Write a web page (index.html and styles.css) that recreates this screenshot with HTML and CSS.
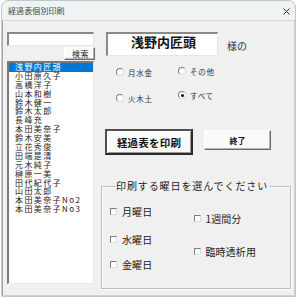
FILE: index.html
```html
<!DOCTYPE html>
<html lang="ja">
<head>
<meta charset="utf-8">
<title>経過表個別印刷</title>
<link rel="stylesheet" href="styles.css">
</head>
<body>
<div class="window">
  <div class="titlebar">
    <span class="title">経過表個別印刷</span>
    <svg class="close" width="7" height="7" viewBox="0 0 7 7"><path d="M0.5 0.5L6.5 6.5M6.5 0.5L0.5 6.5" stroke="#333" stroke-width="1"/></svg>
  </div>
  <div class="client">
    <div class="left">
      <div class="textbox"></div>
      <div class="btn search">検索</div>
      <div class="listbox">
        <div class="item selected">浅野内匠頭</div>
        <div class="item">小田原久子</div>
        <div class="item">高橋洋子</div>
        <div class="item">山本和樹</div>
        <div class="item">鈴木健一</div>
        <div class="item">鈴木太郎</div>
        <div class="item">長峰充</div>
        <div class="item">本田美奈子</div>
        <div class="item">鈴木安美</div>
        <div class="item">立花秀俊</div>
        <div class="item">田端是清</div>
        <div class="item">元木純子</div>
        <div class="item">榊原一美</div>
        <div class="item">田代紀代子</div>
        <div class="item">山田太郎</div>
        <div class="item">本田美奈子No2</div>
        <div class="item">本田美奈子No3</div>
      </div>
    </div>
    <div class="right">
      <div class="namerow">
        <div class="namebox">浅野内匠頭</div>
        <div class="sama">様の</div>
      </div>
      <div class="radios">
        <div class="rcol rcol1">
          <div class="radio"><span class="dot"></span><span>月水金</span></div>
          <div class="radio"><span class="dot"></span><span>火木土</span></div>
        </div>
        <div class="rcol rcol2">
          <div class="radio"><span class="dot"></span><span>その他</span></div>
          <div class="radio"><span class="dot checked"></span><span>すべて</span></div>
        </div>
      </div>
      <div class="buttons">
        <div class="btn print">経過表を印刷</div>
        <div class="btn quit">終了</div>
      </div>
      <fieldset class="group">
        <legend>印刷する曜日を選んでください</legend>
        <div class="checks">
          <div class="ccol ccol1">
            <div class="check"><span class="box"></span><span>月曜日</span></div>
            <div class="check"><span class="box"></span><span>水曜日</span></div>
            <div class="check"><span class="box"></span><span>金曜日</span></div>
          </div>
          <div class="ccol ccol2">
            <div class="check"><span class="box"></span><span>1週間分</span></div>
            <div class="check"><span class="box"></span><span>臨時透析用</span></div>
          </div>
        </div>
      </fieldset>
    </div>
  </div>
</div>
</body>
</html>
```
FILE: styles.css
```css
* { box-sizing: border-box; }
html, body { margin: 0; padding: 0; background: #ffffff; }
body {
  font-family: "Noto Sans CJK JP", "Noto Sans", sans-serif;
  color: #222;
  width: 300px;
  height: 300px;
  overflow: hidden;
}
.window {
  margin-left: 1px;
  width: 295px;
  height: 297px;
  border: 1px solid #c6c6c6;
  border-radius: 7px 7px 0 0;
  overflow: hidden;
  display: flex;
  flex-direction: column;
  background: #eef4f3;
}
.titlebar {
  height: 19px;
  flex: none;
  display: flex;
  align-items: center;
  justify-content: space-between;
  padding: 1px 5px 0 6px;
}
.title {
  font-size: 8px;
  line-height: 10px;
  color: #444;
  letter-spacing: 0.1px;
}
.close { display: block; margin-top: 1px; }
.client {
  flex: 1;
  background: #f0f0f0;
  border-top: 1px solid #d4d4d4;
  border-left: 1px solid #a4a4a4;
  border-right: 1px solid #d0d0d0;
  border-bottom: 1px solid #d0d0d0;
  display: flex;
  padding: 11px 0 0 4px;
}
.left {
  width: 87px;
  flex: none;
  display: flex;
  flex-direction: column;
}
.textbox {
  height: 14px;
  background: #fff;
  border-style: solid;
  border-width: 2px 1px 1px 2px;
  border-color: #8a8a8a #e6e6e6 #e6e6e6 #8a8a8a;
}
.btn {
  display: flex;
  align-items: center;
  justify-content: center;
  background: #fafafa;
  border: 1px solid;
  border-color: #ffffff #6a6a6a #6a6a6a #ffffff;
  box-shadow: inset -1px -1px #b4b4b4;
  color: #222;
}
.search {
  margin-top: 1px;
  margin-left: 57px;
  width: 31px;
  height: 13px;
  font-size: 8px;
  letter-spacing: 0.5px;
  padding-left: 2px;
}
.listbox {
  margin-top: 1px;
  height: 223px;
  background: #fff;
  border-style: solid;
  border-width: 2px 1px 1px 2px;
  border-color: #7a7a7a #e8e8e8 #e8e8e8 #7a7a7a;
}
.item {
  height: 8.9px;
  line-height: 8.9px;
  font-size: 8px;
  letter-spacing: 1.4px;
  padding-left: 6px;
  color: #222;
  white-space: nowrap;
}
.item.selected {
  background: #0078d7;
  color: #fff;
}
.right {
  margin-left: 7px;
  width: 190px;
  flex: none;
  display: flex;
  flex-direction: column;
}
.namerow {
  display: flex;
  align-items: flex-start;
}
.namebox {
  margin-left: 5px;
  width: 112px;
  height: 24px;
  background: #fff;
  border-style: solid;
  border-width: 2px 1px 1px 2px;
  border-color: #8a8a8a #e6e6e6 #e6e6e6 #8a8a8a;
  font-size: 13px;
  font-weight: 700;
  line-height: 15px;
  padding: 0 0 0 23px;
  color: #111;
}
.sama {
  margin-left: 9px;
  margin-top: 8px;
  font-size: 10px;
  line-height: 12px;
  color: #333;
}
.radios {
  display: flex;
  padding-top: 11px;
}
.rcol {
  display: flex;
  flex-direction: column;
}
.rcol1 { width: 62px; margin-left: 15px; gap: 16px; }
.rcol2 { margin-top: -1px; gap: 14px; }
.radio {
  height: 10px;
  display: flex;
  align-items: center;
  gap: 4px;
  font-size: 7.5px;
  letter-spacing: 0.7px;
  color: #333;
}
.dot {
  width: 8px;
  height: 8px;
  border-radius: 50%;
  background: #fff;
  border: 1px solid;
  border-color: #7c7c7c #dadada #dadada #7c7c7c;
  display: flex;
  align-items: center;
  justify-content: center;
  flex: none;
}
.dot.checked::after {
  content: "";
  width: 3px;
  height: 3px;
  border-radius: 50%;
  background: #111;
}
.buttons {
  display: flex;
  align-items: flex-start;
  margin-top: 26px;
}
.print {
  margin-left: 4px;
  width: 88px;
  height: 26px;
  font-size: 10.5px;
  font-weight: 700;
  border: 2px solid;
  border-color: #505050 #2a2a2a #2a2a2a #505050;
  box-shadow: inset 1px 1px #fff, inset -1px -1px #9a9a9a;
  letter-spacing: 0.2px;
  color: #111;
}
.quit {
  margin-left: 11px;
  margin-top: 1px;
  width: 67px;
  height: 20px;
  font-size: 8px;
  font-weight: 700;
  color: #111;
}
.group {
  margin: 25px 0 0 0;
  padding: 0 0 0 8px;
  width: 190px;
  height: 109px;
  border: 1px solid #bcbcbc;
  box-shadow: inset 1px 1px #fff, 1px 1px #fff;
  min-inline-size: 0;
}
.group legend {
  margin-left: 5px;
  padding: 0 1px;
  font-size: 10px;
  line-height: 12px;
  letter-spacing: 0.9px;
  color: #222;
}
.checks {
  display: flex;
}
.ccol {
  display: flex;
  flex-direction: column;
}
.ccol1 { width: 83.5px; margin-top: 13px; }
.ccol1 .check:nth-child(2) { margin-top: 16.4px; }
.ccol1 .check:nth-child(3) { margin-top: 13px; }
.ccol2 { margin-top: 20.5px; }
.ccol2 .check:nth-child(2) { margin-top: 21.3px; }
.check {
  height: 12px;
  display: flex;
  align-items: center;
  gap: 5px;
  font-size: 10px;
  color: #222;
  letter-spacing: 0.1px;
}
.box {
  width: 7px;
  height: 7px;
  background: #fff;
  border: 1px solid;
  border-color: #7c7c7c #dcdcdc #dcdcdc #7c7c7c;
  flex: none;
}
```
